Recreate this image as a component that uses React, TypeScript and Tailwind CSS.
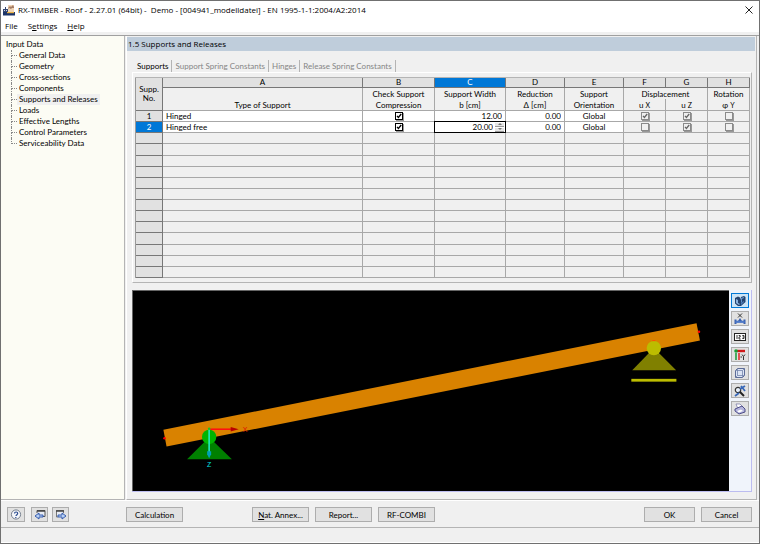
import { useState } from "react";
import type { ReactNode } from "react";
import clsx from "clsx";

type SupportRow = {
  type: string;
  compression: boolean;
  width: string;
  reduction: string;
  orientation: string;
  ux: boolean;
  uz: boolean;
  phi: boolean;
};

const navItems = [
  "General Data",
  "Geometry",
  "Cross-sections",
  "Components",
  "Supports and Releases",
  "Loads",
  "Effective Lengths",
  "Control Parameters",
  "Serviceability Data",
];

const tabs = ["Supports", "Support Spring Constants", "Hinges", "Release Spring Constants"];

const columnLetters = ["A", "B", "C", "D", "E", "F", "G", "H"];

const supportRows: SupportRow[] = [
  {
    type: "Hinged",
    compression: true,
    width: "12.00",
    reduction: "0.00",
    orientation: "Global",
    ux: true,
    uz: true,
    phi: false,
  },
  {
    type: "Hinged free",
    compression: true,
    width: "20.00",
    reduction: "0.00",
    orientation: "Global",
    ux: false,
    uz: true,
    phi: false,
  },
];

const emptyRows = Array.from({ length: 13 }, (_, index) => index);

function AppIcon() {
  return (
    <svg viewBox="0 0 12 12" className="h-3 w-3 shrink-0">
      <path d="M0 5h2V3h1v2h2v5H0z" fill="#34466f" />
      <path d="M1 6h1v1H1zM3 6h1v1H3z" fill="#c8d4e8" />
      <path d="M5 1h6v7H5z" fill="#f0d4b4" />
      <path d="M5 4l2-2 1 1 2-2 1 2v1L9 4 8 5 6 4 5 5z" fill="#a47c64" />
      <rect x="0" y="8" width="12" height="3.500" fill="#1c3468" />
      <path d="M4 8h7v1.200H4z" fill="#e8b040" />
    </svg>
  );
}

function TitleBar() {
  return (
    <header className="flex h-[18px] items-center gap-[3px] bg-white pr-1 pl-0.5">
      <AppIcon />
      <h1 className="flex-1 font-['Open_Sans',sans-serif] text-[8px] whitespace-pre text-black">
        RX-TIMBER - Roof - 2.27.01 (64bit) -{"  "}Demo - [004941_modelldatei] - EN 1995-1-1:2004/A2:2014
      </h1>
      <button type="button" aria-label="Close" className="flex h-3 w-3 items-center justify-center">
        <svg viewBox="0 0 8 8" className="h-2 w-2" stroke="#222" strokeWidth="1" fill="none">
          <path d="M0.500 0.500l7 7M7.500 0.500l-7 7" />
        </svg>
      </button>
    </header>
  );
}

function MenuBar() {
  return (
    <nav className="flex h-[13px] items-center gap-2.5 bg-white pl-1 font-['Open_Sans',sans-serif] text-[8px] text-black">
      <button type="button">File</button>
      <button type="button">
        S<u>e</u>ttings
      </button>
      <button type="button">
        <u>H</u>elp
      </button>
    </nav>
  );
}

function Sidebar() {
  const [active, setActive] = useState("Supports and Releases");

  return (
    <aside className="w-[124px] shrink-0 border-r border-b border-[#b4b4b4] bg-[#fcfcf4] pt-[3px] pl-[5px] text-[8px] leading-[11px] text-black">
      <p>Input Data</p>
      <ul className="ml-[5px]">
        {navItems.map((item, index) => (
          <li key={item} className="flex h-[11px] items-center">
            <span className="flex h-full w-1.5 flex-col">
              <span className="h-1/2 border-b border-l border-dotted border-[#888]" />
              <span
                className={clsx(
                  "h-1/2 border-dotted border-[#888]",
                  index < navItems.length - 1 && "border-l",
                )}
              />
            </span>
            <button
              type="button"
              className={clsx("px-0.5", item === active && "bg-[#f0f0f0]")}
              onClick={() => setActive(item)}
            >
              {item}
            </button>
          </li>
        ))}
      </ul>
    </aside>
  );
}

function TabStrip() {
  const [active, setActive] = useState(tabs[0]);

  return (
    <div role="tablist" className="flex h-3 pl-0.5 text-[8px] leading-3">
      {tabs.map((tab) => (
        <button
          key={tab}
          type="button"
          role="tab"
          aria-selected={tab === active}
          className={clsx(
            "border-r border-[#b4b4b4] px-[3px]",
            tab === active ? "text-black" : "text-[#858585]",
          )}
          onClick={() => setActive(tab)}
        >
          {tab}
        </button>
      ))}
    </div>
  );
}

type TickBoxProps = Readonly<{
  label: string;
  checked: boolean;
  muted?: boolean;
}>;

function TickBox({ label, checked, muted = false }: TickBoxProps) {
  return (
    <label className="mx-auto grid h-2 w-2">
      <input
        type="checkbox"
        aria-label={label}
        defaultChecked={checked}
        className={clsx(
          "peer col-start-1 row-start-1 h-2 w-2 appearance-none border shadow-[1px_1px_0_#999]",
          muted ? "border-[#8a8a8a] bg-[#f0f0f0]" : "border-black bg-white",
        )}
      />
      <svg
        viewBox="0 0 8 8"
        className="pointer-events-none invisible col-start-1 row-start-1 h-2 w-2 peer-checked:visible"
        fill="none"
        stroke={muted ? "#666" : "#000"}
        strokeWidth="1.3"
      >
        <path d="M2 3.800l1.400 1.700L6.200 2" />
      </svg>
    </label>
  );
}

const cell = "border-r border-b border-[#a8a8a8] p-0";
const headCell = "border-r border-[#a8a8a8] p-0 font-normal";

function SupportsTable() {
  return (
    <table className="h-[200px] w-full table-fixed border-separate border-spacing-0 border-l border-[#999] text-[8px] leading-[10px] text-black">
      <colgroup>
        <col className="w-[27px]" />
        <col />
        <col className="w-[72px]" />
        <col className="w-[71px]" />
        <col className="w-[59px]" />
        <col className="w-[59px]" />
        <col className="w-[42px]" />
        <col className="w-[42px]" />
        <col className="w-[42px]" />
      </colgroup>
      <thead>
        <tr className="h-[10px]">
          <th
            rowSpan={3}
            className="border-r border-b border-[#777] bg-[#e1e1e1] p-0 leading-[9px] font-normal"
          >
            Supp.
            <br />
            No.
          </th>
          {columnLetters.map((letter) => (
            <th
              key={letter}
              className={clsx(
                "border-r border-b border-[#777] p-0 leading-[9px] font-normal",
                letter === "C" ? "bg-[#0078d7] text-white" : "bg-[#e1e1e1]",
              )}
            >
              {letter}
            </th>
          ))}
        </tr>
        <tr className="h-[11px]">
          <th className={headCell} />
          <th className={headCell}>Check Support</th>
          <th className={headCell}>Support Width</th>
          <th className={headCell}>Reduction</th>
          <th className={headCell}>Support</th>
          <th colSpan={2} className={headCell}>
            Displacement
          </th>
          <th className={headCell}>Rotation</th>
        </tr>
        <tr className="h-[12px]">
          <th className={clsx(headCell, "border-b")}>Type of Support</th>
          <th className={clsx(headCell, "border-b")}>Compression</th>
          <th className={clsx(headCell, "border-b")}>b [cm]</th>
          <th className={clsx(headCell, "border-b")}>Δ [cm]</th>
          <th className={clsx(headCell, "border-b")}>Orientation</th>
          <th className={clsx(headCell, "border-b")}>
            u <span className="text-[7px]">X</span>
          </th>
          <th className={clsx(headCell, "border-b")}>
            u <span className="text-[7px]">Z</span>
          </th>
          <th className={clsx(headCell, "border-b")}>
            φ <span className="text-[7px]">Y</span>
          </th>
        </tr>
      </thead>
      <tbody>
        {supportRows.map((row, index) => {
          const selected = index === 1;
          return (
            <tr key={row.type} className="h-[11px]">
              <th
                className={clsx(
                  "border-r border-b border-[#777] p-0 font-normal",
                  selected ? "bg-[#0078d7] text-white" : "bg-[#e1e1e1]",
                )}
              >
                {index + 1}
              </th>
              <td className={clsx(cell, "bg-white")}>
                <span className="pl-[3px]">{row.type}</span>
              </td>
              <td className={clsx(cell, "bg-white")}>
                <TickBox label="Check support compression" checked={row.compression} />
              </td>
              <td className={clsx(cell, "bg-white")}>
                <div
                  className={clsx(
                    "flex h-[10px] items-center",
                    selected ? "pr-px outline outline-black" : "pr-[3px]",
                  )}
                >
                  <input
                    aria-label="Support width"
                    defaultValue={row.width}
                    className="h-[10px] min-w-0 flex-1 text-right outline-none"
                  />
                  {selected && (
                    <span className="ml-0.5 flex w-[9px] flex-col gap-px">
                      <button
                        type="button"
                        aria-label="Increase"
                        className="flex h-1 justify-center border-b border-[#999] bg-[#e4e4e4]"
                      >
                        <svg viewBox="0 0 4 2" className="h-0.5 w-1">
                          <path d="M0 2l2-2 2 2z" fill="#777" />
                        </svg>
                      </button>
                      <button
                        type="button"
                        aria-label="Decrease"
                        className="flex h-1 justify-center border-b border-[#999] bg-[#e4e4e4]"
                      >
                        <svg viewBox="0 0 4 2" className="h-0.5 w-1">
                          <path d="M0 0l2 2 2-2z" fill="#777" />
                        </svg>
                      </button>
                    </span>
                  )}
                </div>
              </td>
              <td className={clsx(cell, "bg-white")}>
                <input
                  aria-label="Reduction"
                  defaultValue={row.reduction}
                  className="block h-[10px] w-full pr-[3px] text-right outline-none"
                />
              </td>
              <td className={clsx(cell, "bg-white text-center")}>{row.orientation}</td>
              <td className={cell}>
                <TickBox label="Displacement uX" checked={row.ux} muted />
              </td>
              <td className={cell}>
                <TickBox label="Displacement uZ" checked={row.uz} muted />
              </td>
              <td className={cell}>
                <TickBox label="Rotation φY" checked={row.phi} muted />
              </td>
            </tr>
          );
        })}
        {emptyRows.map((row) => (
          <tr key={row} className="h-[11px]">
            <th className="border-r border-b border-[#777] bg-[#e1e1e1] p-0" />
            {columnLetters.map((letter) => (
              <td key={letter} className={cell} />
            ))}
          </tr>
        ))}
      </tbody>
    </table>
  );
}

function BeamView() {
  return (
    <svg viewBox="133 291 595 200" className="h-full w-full" role="img" aria-label="Roof beam">
      <path d="M163.3 429.5L695.6 323.3L699 340.5L166.5 446.3z" fill="#d98200" />
      <path d="M209 437L231.7 459H187z" fill="#008000" />
      <circle cx="209" cy="436.7" r="7.2" fill="#00b400" />
      <path d="M653 348L675.2 370H631.4z" fill="#808000" />
      <circle cx="653" cy="348" r="7.2" fill="#bcbc00" />
      <rect x="630.5" y="378.7" width="45" height="2.8" fill="#bcbc00" />
      <path d="M210 429h22" stroke="#ff1010" strokeWidth="1.6" />
      <path d="M230.500 426.700L238.500 429L230.500 431.300z" fill="#b80000" />
      <path d="M209 429v23" stroke="#20e8c0" strokeWidth="1.6" />
      <path d="M207 451h4v3l-2 4-2-4z" fill="#00a0b8" />
      <circle cx="209" cy="428.500" r="1.300" fill="#20c020" />
      <circle cx="164.500" cy="438" r="1.300" fill="#ff0000" />
      <circle cx="698" cy="331.700" r="1.300" fill="#ff0000" />
      <path d="M651.500 340.500h3" stroke="#ff5000" strokeWidth="1" />
      <g fontFamily="'Liberation Sans', sans-serif" fontSize="7">
        <text x="242.500" y="431.500" fill="#e01000">
          X
        </text>
        <text x="207" y="467" fill="#00e0e0">
          Z
        </text>
      </g>
    </svg>
  );
}

const viewTools: { label: string; icon: ReactNode }[] = [
  {
    label: "Render view",
    icon: (
      <>
        <path d="M1 3l3-1.500 2 1V5l1-3 3-1 1.500 1v5L7 11H4L1 8.500z" fill="#24426e" />
        <path d="M2 4l2 1v3l2 1-1 1-3-2z" fill="#8cb4e0" />
        <path d="M7 3l3-1v1L8 4v3l-1 1z" fill="#6494cc" />
        <path d="M7 8l3-2v1l-3 3z" fill="#4c7cb8" />
      </>
    ),
  },
  {
    label: "Dimensions",
    icon: (
      <>
        <path d="M4 0.500l4 4M8 0.500l-4 4" stroke="#333" strokeWidth="1" />
        <path d="M1.500 6.500v4.500M10.500 6.500v4.500" stroke="#3860b0" strokeWidth="2" />
        <path d="M1.500 8.800h9" stroke="#4c78c8" strokeWidth="2.200" />
        <path d="M4 8l2-3 2 3z" fill="#3860b0" />
      </>
    ),
  },
  {
    label: "Numbering",
    icon: (
      <>
        <rect x="0.500" y="2.500" width="11" height="7" fill="#fff" stroke="#222" />
        <path
          d="M3 4v4M4.700 4.500h1.500v1.500H5v2h1.700M8.300 4.500H10v3H8.300M8.600 6H10"
          stroke="#222"
          strokeWidth="0.900"
        />
      </>
    ),
  },
  {
    label: "Axes",
    icon: (
      <>
        <path d="M3 2h8" stroke="#d01818" strokeWidth="2.400" />
        <path d="M2 4v7" stroke="#20a040" strokeWidth="1.600" />
        <circle cx="2" cy="2" r="1.800" fill="#18a038" />
        <path d="M5 4v7" stroke="#e03030" strokeWidth="1.600" />
        <path d="M6.500 8h1.500M8 5.500l1.500 2L11 5.500M9.500 7.500V11" stroke="#333" strokeWidth="1" />
      </>
    ),
  },
  {
    label: "Isometric view",
    icon: (
      <>
        <path d="M1.500 3.500l2-2h7v7l-2 2h-7z" fill="#dce4f4" stroke="#5c6c98" />
        <path
          d="M1.500 3.500h7v7M8.500 3.500l2-2M3.500 1.500v7h7M3.500 8.500l-2 2"
          stroke="#7484ac"
          strokeWidth="0.800"
        />
      </>
    ),
  },
  {
    label: "Zoom all",
    icon: (
      <>
        <circle cx="4" cy="5" r="2.700" fill="#e8f0fa" stroke="#333" strokeWidth="1.200" />
        <path d="M6 7l4 4" stroke="#222" strokeWidth="2" />
        <path d="M6 4l5-3M7 1l4 5M1 11l4-3" stroke="#3868b8" strokeWidth="1.800" />
      </>
    ),
  },
  {
    label: "Print graphic",
    icon: (
      <>
        <path d="M2 1h4l3 3-5 2z" fill="#fff" stroke="#7070a0" strokeWidth="0.700" />
        <path d="M1 6l7-3 3 3v3l-6 2-4-3z" fill="#b4b4dc" stroke="#404080" strokeWidth="0.900" />
        <path d="M3 8l4-1.500 2 1.500-4 1.500z" fill="#fff" />
      </>
    ),
  },
];

function ViewToolbar() {
  return (
    <div className="flex w-[23px] shrink-0 flex-col items-center gap-[3px] border-r border-[#bcbcf0] bg-[#f0f4fb] pt-[3px]">
      {viewTools.map((tool, index) => (
        <button
          key={tool.label}
          type="button"
          aria-label={tool.label}
          className={clsx(
            "flex h-[15px] w-[18px] items-center justify-center border",
            index === 0 ? "border-[#0078d7] bg-[#cce4f7]" : "border-[#adadad] bg-[#e1e1e1]",
          )}
        >
          <svg viewBox="0 0 12 12" className="h-3 w-3" fill="none">
            {tool.icon}
          </svg>
        </button>
      ))}
    </div>
  );
}

type PushButtonProps = Readonly<{
  children: ReactNode;
  className?: string;
  label?: string;
}>;

function PushButton({ children, className, label }: PushButtonProps) {
  return (
    <button
      type="button"
      aria-label={label}
      className={clsx(
        "flex h-[15px] items-center justify-center border border-[#adadad] bg-[#e1e1e1]",
        className,
      )}
    >
      {children}
    </button>
  );
}

function Footer() {
  return (
    <footer className="flex h-[28px] shrink-0 items-center border-t border-b border-t-white border-b-[#b4b4b4] pt-px pr-[7px] pl-1.5 text-[8px] text-black">
      <div className="flex w-[119px] shrink-0">
        <PushButton label="Help" className="mr-1.5 w-[18px]">
          <svg viewBox="0 0 12 12" className="h-3 w-3" fill="none">
            <circle cx="6" cy="5.500" r="4.600" fill="#f4f6fa" stroke="#76808f" strokeWidth="1" />
            <path
              d="M4.500 4.500c0-2 3.200-2 3.200 0 0 1.200-1.500 1.200-1.700 2.500M5.800 8v1"
              stroke="#2c4c90"
              strokeWidth="1.200"
            />
          </svg>
        </PushButton>
        <PushButton label="Previous table" className="mr-1 w-[17px]">
          <svg viewBox="0 0 12 12" className="h-3 w-3" fill="none">
            <path d="M3 4V1.500h8v6H8" fill="#e8ecf4" stroke="#555" />
            <path d="M3 2h8" stroke="#444" strokeWidth="1.500" />
            <path d="M1 7l4-3v2h4v2H5v2z" fill="#b8d0f4" stroke="#2850a8" strokeWidth="0.900" />
          </svg>
        </PushButton>
        <PushButton label="Next table" className="w-[17px]">
          <svg viewBox="0 0 12 12" className="h-3 w-3" fill="none">
            <path d="M3 8H1.500V1.500h7V4" fill="#e8ecf4" stroke="#777" />
            <path d="M1 2h8" stroke="#444" strokeWidth="1.500" />
            <path d="M11 7L7 4v2H3v2h4v2z" fill="#b8d0f4" stroke="#2850a8" strokeWidth="0.900" />
          </svg>
        </PushButton>
      </div>
      <PushButton className="w-[57px]">Calculation</PushButton>
      <div className="ml-[69px] flex gap-1.5">
        <PushButton className="w-[57px]">
          <span>
            <u>N</u>at. Annex...
          </span>
        </PushButton>
        <PushButton className="w-[57px]">Report...</PushButton>
        <PushButton className="w-[57px]">RF-COMBI</PushButton>
      </div>
      <div className="ml-auto flex gap-1.5">
        <PushButton className="w-[51px]">OK</PushButton>
        <PushButton className="w-[51px]">Cancel</PushButton>
      </div>
    </footer>
  );
}

export default function App() {
  return (
    <div className="flex min-h-screen flex-col border border-[#707070] bg-[#f0f0f0] font-['Lato',sans-serif]">
      <TitleBar />
      <MenuBar />
      <main className="mt-[3px] flex flex-1 gap-px border-t border-[#a0a0a0]">
        <Sidebar />
        <section className="mr-0.5 flex min-w-0 flex-1 flex-col border-r border-b border-l border-[#b4b4b4] border-l-white pt-px">
          <h2 className="mr-px h-[14px] bg-[#bfcddb] pl-px font-['Open_Sans',sans-serif] text-[8px] leading-[14px] text-black">
            1.5 Supports and Releases
          </h2>
          <div className="mt-[9px] mr-1 ml-[5px] flex flex-1 flex-col">
            <TabStrip />
            <div className="border border-white border-r-[#b4b4b4] border-b-[#b4b4b4] pt-1 pr-px pb-1 pl-0.5">
              <div className="border-t border-[#b4b4b4]">
                <SupportsTable />
              </div>
            </div>
            <div className="mt-[7px] mb-[7px] flex flex-1 border-b border-[#bcbcf0]">
              <div className="min-w-0 flex-1 border-t border-l border-[#666] bg-black">
                <BeamView />
              </div>
              <ViewToolbar />
            </div>
          </div>
        </section>
      </main>
      <Footer />
      <div className="h-[15px] shrink-0 border-b border-white" />
    </div>
  );
}
